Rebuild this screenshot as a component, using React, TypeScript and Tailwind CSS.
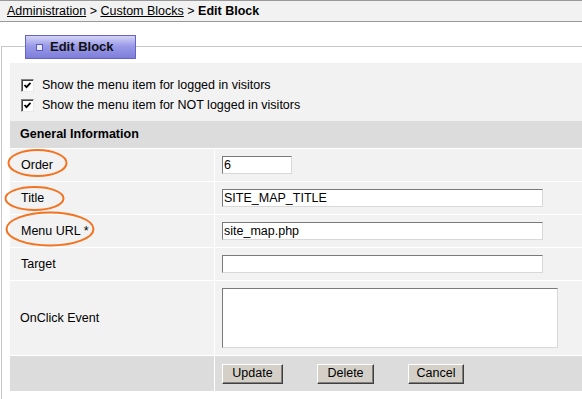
import React from "react";

function Check() {
  return (
    <span className="w-[13px] h-[13px] shrink-0 bg-white border border-t-[#808080] border-l-[#808080] border-r-[#e8e8e8] border-b-[#e8e8e8] shadow-[inset_1px_1px_0_#404040] flex items-center justify-center">
      <svg width="9" height="9" viewBox="0 0 9 9">
        <path d="M1.5 4 L3.5 6.2 L7.5 1.8" fill="none" stroke="#000" strokeWidth="1.8" />
      </svg>
    </span>
  );
}

function TextBox({ value, w }: { value: string; w: string }) {
  return (
    <div
      className={`${w} h-[18px] bg-white border border-t-[#7a7a7a] border-l-[#7a7a7a] border-r-[#d8d8d8] border-b-[#d8d8d8] pl-[1px] flex items-center leading-none`}
    >
      {value}
    </div>
  );
}

function Btn({ label, w }: { label: string; w: string }) {
  return (
    <div
      className={`${w} h-[20px] bg-[#d4d0c8] border border-t-white border-l-white border-r-[#404040] border-b-[#404040] shadow-[inset_-1px_-1px_0_#808080] flex items-center justify-center leading-none`}
    >
      {label}
    </div>
  );
}

export default function App() {
  return (
    <div className="relative w-[582px] h-[399px] overflow-hidden bg-white text-black text-[12.5px] font-['Liberation_Sans',Arial,sans-serif]">
      {/* breadcrumb */}
      <div className="h-[22px] border-t border-b border-[#999999] bg-[#f2f2f2] pl-[7px] flex items-center text-[12.5px]">
        <span className="underline">Administration</span>
        <span>&nbsp;&gt;&nbsp;</span>
        <span className="underline">Custom Blocks</span>
        <span>&nbsp;&gt;&nbsp;</span>
        <span className="font-bold">Edit Block</span>
      </div>

      {/* fieldset */}
      <div className="relative mt-[24px] ml-px border-l border-t border-[#c8c8c8] pt-[16px] pl-[8px] pb-[20px]">
        <div className="absolute left-[23px] top-[-12px] w-[111px] h-[24px] border border-[#6464c4] bg-[linear-gradient(#d4d4f6,#9a9ae8_45%,#7e7edb)] flex items-center pl-[10px] gap-[7px]">
          <span className="w-[7px] h-[7px] bg-[#e8e8ff] border border-[#5a5ac0]" />
          <span className="font-bold text-[13px] text-[#111]">Edit Block</span>
        </div>

        <div className="bg-white">
          <div className="bg-[#f2f2f2] pt-[12px] pb-[6px] pl-[11px]">
            <div className="h-[20px] flex items-center gap-[8px]">
              <Check />
              <span>Show the menu item for logged in visitors</span>
            </div>
            <div className="h-[20px] flex items-center gap-[8px]">
              <Check />
              <span>Show the menu item for NOT logged in visitors</span>
            </div>
          </div>
          <div className="h-[27px] bg-[#dcdcdc] pl-[10px] flex items-center font-bold">
            General Information
          </div>
          <div className="mt-px grid grid-cols-[204px_1fr] gap-px">
            <div className="h-[32px] bg-[#f2f2f2] pl-[11px] flex items-center">Order</div>
            <div className="h-[32px] bg-[#f2f2f2] pl-[7px] flex items-center">
              <TextBox value="6" w="w-[70px]" />
            </div>
            <div className="h-[32px] bg-[#f2f2f2] pl-[11px] flex items-center">Title</div>
            <div className="h-[32px] bg-[#f2f2f2] pl-[7px] flex items-center">
              <TextBox value="SITE_MAP_TITLE" w="w-[321px]" />
            </div>
            <div className="h-[32px] bg-[#f2f2f2] pl-[11px] flex items-center">Menu URL *</div>
            <div className="h-[32px] bg-[#f2f2f2] pl-[7px] flex items-center">
              <TextBox value="site_map.php" w="w-[321px]" />
            </div>
            <div className="h-[32px] bg-[#f2f2f2] pl-[11px] flex items-center">Target</div>
            <div className="h-[32px] bg-[#f2f2f2] pl-[7px] flex items-center">
              <TextBox value="" w="w-[321px]" />
            </div>
            <div className="h-[74px] bg-[#f2f2f2] pl-[10px] flex items-center">OnClick Event</div>
            <div className="h-[74px] bg-[#f2f2f2] pl-[7px] flex items-center">
              <div className="w-[336px] h-[60px] bg-white border border-t-[#7a7a7a] border-l-[#7a7a7a] border-r-[#d8d8d8] border-b-[#d8d8d8]" />
            </div>
            <div className="h-[35px] bg-[#dcdcdc]" />
            <div className="h-[35px] bg-[#dcdcdc] pl-[7px] flex items-center gap-[34px]">
              <Btn label="Update" w="w-[61px]" />
              <Btn label="Delete" w="w-[57px]" />
              <Btn label="Cancel" w="w-[56px]" />
            </div>
          </div>
        </div>
      </div>

      {/* annotation ellipses */}
      <svg className="absolute left-0 top-0 pointer-events-none" width="582" height="399">
        <ellipse cx="37.5" cy="163" rx="29" ry="13" fill="none" stroke="#f47320" strokeWidth="2" />
        <ellipse cx="34.5" cy="198.5" rx="29" ry="11.5" fill="none" stroke="#f47320" strokeWidth="2" />
        <ellipse cx="50" cy="229" rx="43.5" ry="16.5" fill="none" stroke="#f47320" strokeWidth="2" />
      </svg>
    </div>
  );
}
